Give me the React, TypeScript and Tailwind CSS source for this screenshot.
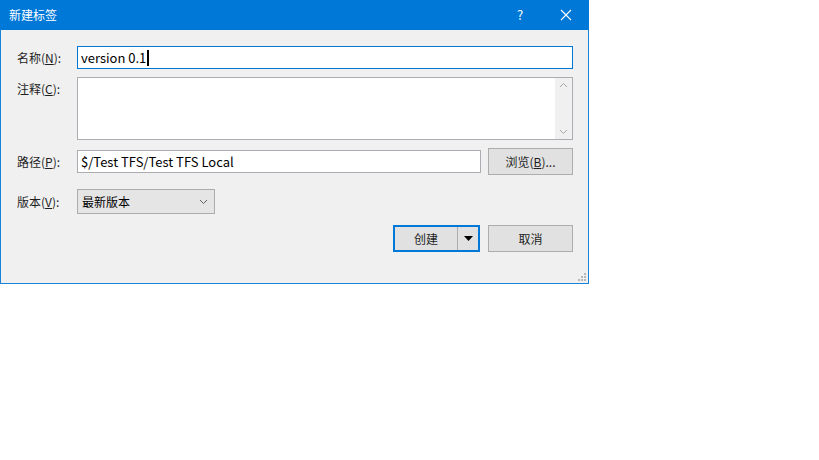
import React from 'react';

const font = { fontFamily: '"Noto Sans CJK SC", "Noto Sans", sans-serif' };

const Label: React.FC<{ text: string; k: string }> = ({ text, k }) => (
  <div className="w-[60px] shrink-0 text-[12px] leading-[18px] text-[#1e1e1e]">
    {text}(<span className="underline">{k}</span>):
  </div>
);

export default function App() {
  return (
    <div className="w-[819px] h-[460px] bg-white" style={font}>
      <div className="w-[589px] h-[284px] border border-[#1883d7] border-t-0 flex flex-col bg-[#f0f0f0]">
        {/* title bar */}
        <div className="h-[30px] bg-[#0078d7] flex items-center text-white -mx-px">
          <span className="ml-[9px] text-[12px] flex-1">新建标签</span>
          <span className="w-[46px] text-center text-[13px]">?</span>
          <span className="w-[46px] flex justify-center">
            <svg width="12" height="12" viewBox="0 0 12 12" stroke="white" strokeWidth="1.1">
              <path d="M1 1L11 11M11 1L1 11" />
            </svg>
          </span>
        </div>

        <div className="flex-1 flex flex-col pl-[16px] pr-[15px] pt-[16px]">
          {/* name */}
          <div className="flex items-center h-[23px]">
            <Label text="名称" k="N" />
            <div className="flex-1 h-[23px] bg-white border border-[#0078d7] flex items-center pl-[3px] text-[13px] text-black">
              version 0.1<span className="w-[2px] h-[16px] bg-black ml-[1px]" />
            </div>
          </div>

          {/* comment */}
          <div className="flex items-start mt-[8px]">
            <div className="pt-[3px]"><Label text="注释" k="C" /></div>
            <div className="flex-1 h-[63px] bg-white border border-[#abadb3] flex justify-end">
              <div className="w-[17px] bg-[#f0f0f0] flex flex-col justify-between items-center py-[4px]">
                <svg width="9" height="6" viewBox="0 0 9 6" fill="none" stroke="#a6a6a6"><path d="M1 5L4.5 1.5L8 5" /></svg>
                <svg width="9" height="6" viewBox="0 0 9 6" fill="none" stroke="#a6a6a6"><path d="M1 1L4.5 4.5L8 1" /></svg>
              </div>
            </div>
          </div>

          {/* path */}
          <div className="flex items-center mt-[8px] h-[27px]">
            <Label text="路径" k="P" />
            <div className="flex-1 h-[23px] bg-white border border-[#abadb3] flex items-center pl-[3px] text-[13px] text-black">
              $/Test TFS/Test TFS Local
            </div>
            <div className="ml-[7px] w-[85px] h-[27px] bg-[#e1e1e1] border border-[#adadad] flex items-center justify-center text-[12px] text-[#1e1e1e]">
              浏览(<span className="underline">B</span>)...
            </div>
          </div>

          {/* version */}
          <div className="flex items-center mt-[14px] h-[25px]">
            <Label text="版本" k="V" />
            <div className="w-[138px] h-[25px] bg-[#e5e5e5] border border-[#acacac] flex items-center pl-[4px] pr-[6px] text-[12px] text-black">
              <span className="flex-1">最新版本</span>
              <svg width="9" height="6" viewBox="0 0 9 6" fill="none" stroke="#606060"><path d="M1 1L4.5 4.5L8 1" /></svg>
            </div>
          </div>

          {/* buttons */}
          <div className="flex justify-end mt-[11px] gap-[8px]">
            <div className="w-[87px] h-[27px] border-2 border-[#0078d7] bg-[#e1e1e1] flex items-center text-[12px] text-[#1e1e1e]">
              <span className="flex-1 text-center">创建</span>
              <span className="w-px h-[23px] bg-[#adadad]" />
              <span className="w-[20px] flex justify-center">
                <svg width="9" height="5" viewBox="0 0 9 5"><path d="M0 0H9L4.5 5Z" fill="#000" /></svg>
              </span>
            </div>
            <div className="w-[85px] h-[27px] bg-[#e1e1e1] border border-[#adadad] flex items-center justify-center text-[12px] text-[#1e1e1e]">
              取消
            </div>
          </div>

          <div className="flex-1 flex justify-end items-end pb-[2px] -mr-[13px]">
            <svg width="8" height="8" viewBox="0 0 8 8" fill="#b8b8b8">
              <rect x="6" y="0" width="2" height="2" />
              <rect x="3" y="3" width="2" height="2" />
              <rect x="6" y="3" width="2" height="2" />
              <rect x="0" y="6" width="2" height="2" />
              <rect x="3" y="6" width="2" height="2" />
              <rect x="6" y="6" width="2" height="2" />
            </svg>
          </div>
        </div>
      </div>
    </div>
  );
}
